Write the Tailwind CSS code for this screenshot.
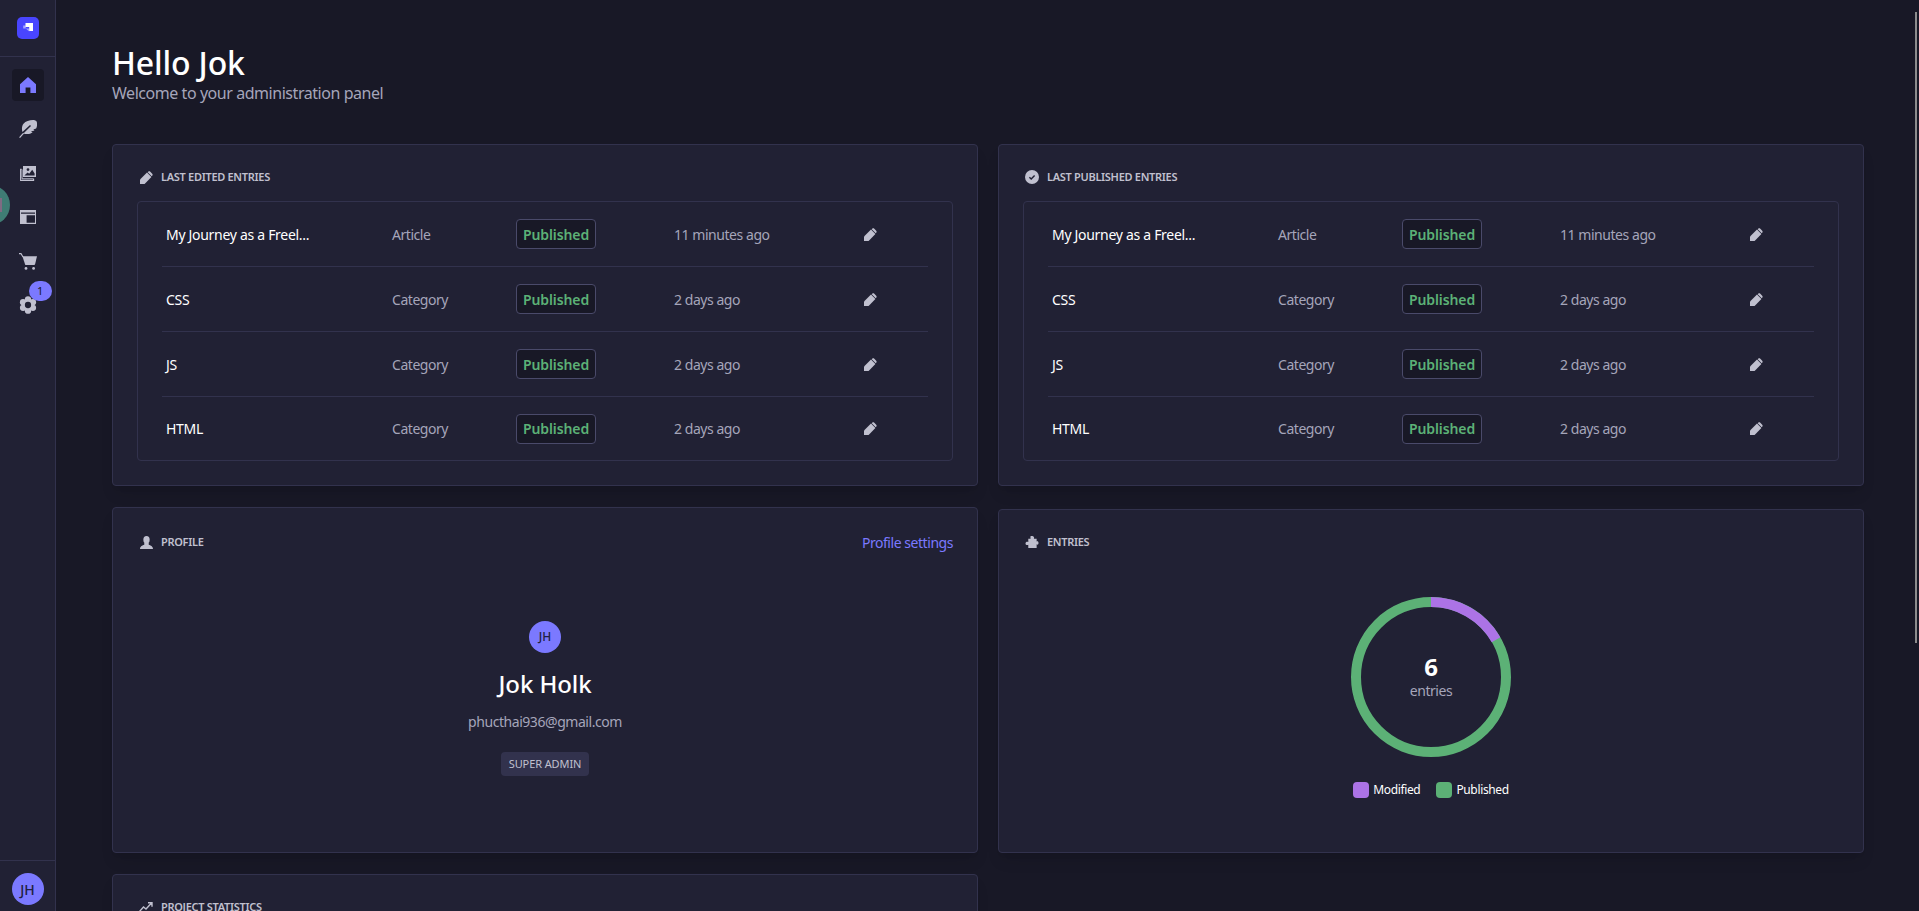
<!doctype html>
<html lang="en">
<head>
<meta charset="utf-8">
<title>Dashboard</title>
<script src="https://cdn.jsdelivr.net/npm/@tailwindcss/browser@4"></script>
</head>
<body class="bg-[#181826] font-['Noto_Sans',sans-serif] tracking-[-0.45px] text-white">
<svg width="0" height="0" class="absolute">
  <defs>
    <g id="pencil"><path d="M0 13V8.4L7 1.6l4.4 4.4L4.6 13z"/><path d="M8.2.8c.6-.6 1.5-.6 2.1 0l1.9 1.9c.6.6.6 1.5 0 2.1l-.5.5-4-4z"/></g>
  </defs>
</svg>
<div class="relative flex h-[911px] w-[1919px] overflow-hidden">
  <!-- sidebar -->
  <aside class="flex h-full w-14 shrink-0 flex-col border-r border-[#32324d] bg-[#212134]">
    <div class="flex h-[57px] shrink-0 items-center justify-center border-b border-[#32324d]">
      <div class="flex h-[22px] w-[22px] items-center justify-center rounded-[5px] bg-[#4945ff]">
        <svg viewBox="0 0 12 12" class="h-3 w-3"><path fill="#fff" d="M3.5 1H11v8H7.2V5H3.500z"/><path fill="#fff" opacity=".5" d="M1.2 3.6h2.6v2.8H1.200zM3.8 6.4h3.4v3.2z"/></svg>
      </div>
    </div>
    <nav class="mt-3 flex flex-col items-center gap-3">
      <a class="flex h-8 w-8 items-center justify-center rounded bg-[#181826]">
        <svg viewBox="0 0 16 16" class="h-4 w-4"><path fill="#7b79ff" d="M8 0 16 7.2V16H10.4V10.6H5.6V16H0V7.2z"/></svg>
      </a>
      <a class="flex h-8 w-8 items-center justify-center">
        <svg viewBox="0 0 18 18" class="h-[18px] w-[18px]"><path fill="#c0c0cf" d="M14 0c-3.500 0-7.500 1.200-9.500 3.800C2.800 6 2.600 9.200 3.400 12L11 5l1 1-7.600 7.400c3.100 1.100 6.800.9 9.200-1.200l-1.700-.7 3.600-.9-1.100-1.100 2.700-.9C18.300 6.300 18.400 3.300 17.600 1.500 16.900.5 15.500 0 14 0z"/><path stroke="#c0c0cf" stroke-width="1.200" d="M.6 17.600 4.600 13.200"/></svg>
      </a>
      <a class="flex h-8 w-8 items-center justify-center">
        <svg viewBox="0 0 16 15" class="h-[15px] w-4"><path fill="#c0c0cf" fill-rule="evenodd" d="M3 0h13v11H3zM8 2.200a1.400 1.400 0 1 0 0 2.800 1.400 1.400 0 0 0 0-2.800zM4.400 9.600h10.200V7.400l-2.400-3.600-3 4-1.600-1.400z"/><path fill="none" stroke="#c0c0cf" stroke-width="1.100" d="M1.600 3.400H.6v11h13v-1.600"/><path fill="none" stroke="#c0c0cf" stroke-width="1" d="M2 3.400v9.400h11.600"/></svg>
      </a>
      <a class="flex h-8 w-8 items-center justify-center">
        <svg viewBox="0 0 16 14" class="h-[14px] w-4"><path fill="#c0c0cf" d="M0 0h16v14H0z"/><path fill="#212134" d="M1 2.400h14v1.300H1zM6.600 5.200H15v7.600H6.600z"/></svg>
      </a>
      <a class="flex h-8 w-8 items-center justify-center">
        <svg viewBox="0 0 18 17" class="h-[17px] w-[18px]"><path fill="none" stroke="#c0c0cf" stroke-width="1.100" d="M0 .6h2l2 3.400"/><path fill="#c0c0cf" d="M3.400 3.200H18l-1.800 7.600-.6 1.200H6.300z"/><circle cx="7" cy="15.400" r="1.400" fill="#c0c0cf"/><circle cx="14.600" cy="15.400" r="1.400" fill="#c0c0cf"/></svg>
      </a>
      <a class="relative flex h-8 w-8 items-center justify-center">
        <svg viewBox="0 0 24 24" class="h-[18px] w-[18px]"><g fill="#c0c0cf"><circle cx="12" cy="4.400" r="4.200"/><circle cx="12" cy="19.600" r="4.200"/><circle cx="5.400" cy="8.200" r="4.200"/><circle cx="18.600" cy="8.200" r="4.200"/><circle cx="5.400" cy="15.800" r="4.200"/><circle cx="18.600" cy="15.800" r="4.200"/><circle cx="12" cy="12" r="7.500"/></g><circle cx="12" cy="12" r="4.200" fill="#212134"/></svg>
        <span class="absolute top-[-8px] left-[17px] flex h-5 w-[23px] items-center justify-center rounded-full bg-[#7b79ff] text-[11px] text-[#181826]">1</span>
      </a>
    </nav>
    <div class="mt-auto flex flex-col items-center border-t border-[#32324d] pt-3 pb-[6px]">
      <div class="flex h-8 w-8 items-center justify-center rounded-full bg-[#7b79ff] text-[14px] font-medium tracking-normal text-[#202040]">JH</div>
    </div>
  </aside>

  <!-- main -->
  <main class="min-w-0 flex-1 pt-[43px] pr-[55px] pl-14">
    <h1 class="text-[32px] leading-10 font-medium tracking-[-0.15px]">Hello Jok</h1>
    <p class="text-[16px] leading-5 text-[#a5a5ba]">Welcome to your administration panel</p>

    <div class="mt-[41px] grid grid-cols-2 gap-x-5 gap-y-[21px]">

      <!-- last edited -->
      <section class="rounded border border-[#32324d] bg-[#212134] p-6 shadow-lg">
        <h2 class="flex h-4 items-center gap-2 text-[11px] font-semibold tracking-[-0.3px] text-[#c0c0cf] uppercase">
          <span class="flex w-4 justify-end"><svg viewBox="0 0 13 13" class="h-[13px] w-[13px] fill-[#c0c0cf]"><use href="#pencil"/></svg></span>Last edited entries
        </h2>
        <div class="mt-4 rounded border border-[#32324d] px-6 text-[14px]">
          <div class="grid h-[65px] grid-cols-[226px_124px_158px_190px_1fr] items-center border-b border-[#32324d] pl-1 text-[#a5a5ba]">
            <span class="tracking-[-0.3px] text-white">My Journey as a Freel...</span><span>Article</span>
            <span class="flex h-[30px] w-20 items-center justify-center rounded border border-[#4a4a6a] bg-[#181826] font-semibold tracking-[-0.1px] text-[#5cb176]">Published</span>
            <span>11 minutes ago</span>
            <svg viewBox="0 0 13 13" class="h-[13px] w-[13px] fill-[#c0c0cf]"><use href="#pencil"/></svg>
          </div>
          <div class="grid h-[65px] grid-cols-[226px_124px_158px_190px_1fr] items-center border-b border-[#32324d] pl-1 text-[#a5a5ba]">
            <span class="tracking-[-0.3px] text-white">CSS</span><span>Category</span>
            <span class="flex h-[30px] w-20 items-center justify-center rounded border border-[#4a4a6a] bg-[#181826] font-semibold tracking-[-0.1px] text-[#5cb176]">Published</span>
            <span>2 days ago</span>
            <svg viewBox="0 0 13 13" class="h-[13px] w-[13px] fill-[#c0c0cf]"><use href="#pencil"/></svg>
          </div>
          <div class="grid h-[65px] grid-cols-[226px_124px_158px_190px_1fr] items-center border-b border-[#32324d] pl-1 text-[#a5a5ba]">
            <span class="tracking-[-0.3px] text-white">JS</span><span>Category</span>
            <span class="flex h-[30px] w-20 items-center justify-center rounded border border-[#4a4a6a] bg-[#181826] font-semibold tracking-[-0.1px] text-[#5cb176]">Published</span>
            <span>2 days ago</span>
            <svg viewBox="0 0 13 13" class="h-[13px] w-[13px] fill-[#c0c0cf]"><use href="#pencil"/></svg>
          </div>
          <div class="grid h-[63px] grid-cols-[226px_124px_158px_190px_1fr] items-center pl-1 text-[#a5a5ba]">
            <span class="tracking-[-0.3px] text-white">HTML</span><span>Category</span>
            <span class="flex h-[30px] w-20 items-center justify-center rounded border border-[#4a4a6a] bg-[#181826] font-semibold tracking-[-0.1px] text-[#5cb176]">Published</span>
            <span>2 days ago</span>
            <svg viewBox="0 0 13 13" class="h-[13px] w-[13px] fill-[#c0c0cf]"><use href="#pencil"/></svg>
          </div>
        </div>
      </section>

      <!-- last published -->
      <section class="rounded border border-[#32324d] bg-[#212134] p-6 shadow-lg">
        <h2 class="flex h-4 items-center gap-2 text-[11px] font-semibold tracking-[-0.3px] text-[#c0c0cf] uppercase">
          <span class="flex w-4 justify-end"><svg viewBox="0 0 14 14" class="h-[14px] w-[14px]"><circle cx="7" cy="7" r="7" fill="#c0c0cf"/><path fill="none" stroke="#212134" stroke-width="1.400" d="M4.400 7.200 6.200 9l3.400-3.600"/></svg></span>Last published entries
        </h2>
        <div class="mt-4 rounded border border-[#32324d] px-6 text-[14px]">
          <div class="grid h-[65px] grid-cols-[226px_124px_158px_190px_1fr] items-center border-b border-[#32324d] pl-1 text-[#a5a5ba]">
            <span class="tracking-[-0.3px] text-white">My Journey as a Freel...</span><span>Article</span>
            <span class="flex h-[30px] w-20 items-center justify-center rounded border border-[#4a4a6a] bg-[#181826] font-semibold tracking-[-0.1px] text-[#5cb176]">Published</span>
            <span>11 minutes ago</span>
            <svg viewBox="0 0 13 13" class="h-[13px] w-[13px] fill-[#c0c0cf]"><use href="#pencil"/></svg>
          </div>
          <div class="grid h-[65px] grid-cols-[226px_124px_158px_190px_1fr] items-center border-b border-[#32324d] pl-1 text-[#a5a5ba]">
            <span class="tracking-[-0.3px] text-white">CSS</span><span>Category</span>
            <span class="flex h-[30px] w-20 items-center justify-center rounded border border-[#4a4a6a] bg-[#181826] font-semibold tracking-[-0.1px] text-[#5cb176]">Published</span>
            <span>2 days ago</span>
            <svg viewBox="0 0 13 13" class="h-[13px] w-[13px] fill-[#c0c0cf]"><use href="#pencil"/></svg>
          </div>
          <div class="grid h-[65px] grid-cols-[226px_124px_158px_190px_1fr] items-center border-b border-[#32324d] pl-1 text-[#a5a5ba]">
            <span class="tracking-[-0.3px] text-white">JS</span><span>Category</span>
            <span class="flex h-[30px] w-20 items-center justify-center rounded border border-[#4a4a6a] bg-[#181826] font-semibold tracking-[-0.1px] text-[#5cb176]">Published</span>
            <span>2 days ago</span>
            <svg viewBox="0 0 13 13" class="h-[13px] w-[13px] fill-[#c0c0cf]"><use href="#pencil"/></svg>
          </div>
          <div class="grid h-[63px] grid-cols-[226px_124px_158px_190px_1fr] items-center pl-1 text-[#a5a5ba]">
            <span class="tracking-[-0.3px] text-white">HTML</span><span>Category</span>
            <span class="flex h-[30px] w-20 items-center justify-center rounded border border-[#4a4a6a] bg-[#181826] font-semibold tracking-[-0.1px] text-[#5cb176]">Published</span>
            <span>2 days ago</span>
            <svg viewBox="0 0 13 13" class="h-[13px] w-[13px] fill-[#c0c0cf]"><use href="#pencil"/></svg>
          </div>
        </div>
      </section>

      <!-- profile -->
      <section class="flex h-[346px] flex-col rounded border border-[#32324d] bg-[#212134] p-6 shadow-lg">
        <div class="flex h-5 items-center justify-between">
          <h2 class="flex items-center gap-2 text-[11px] font-semibold tracking-[-0.3px] text-[#c0c0cf] uppercase">
            <span class="flex w-4 justify-end"><svg viewBox="0 0 14 14" class="h-[13px] w-[13px]"><ellipse cx="7" cy="4" rx="3.400" ry="4" fill="#c0c0cf"/><path fill="#c0c0cf" d="M0 14c0-3 2.600-3.800 4.600-4.600V7h4.800v2.400C11.400 10.200 14 11 14 14z"/></svg></span>Profile
          </h2>
          <a class="text-[14px] text-[#7b79ff]">Profile settings</a>
        </div>
        <div class="flex flex-col items-center">
          <div class="mt-[69px] flex h-8 w-8 items-center justify-center rounded-full bg-[#7b79ff] text-[12px] font-medium tracking-normal text-[#202040]">JH</div>
          <div class="mt-[15px] text-[24px] leading-8 font-medium tracking-[-0.1px]">Jok Holk</div>
          <div class="mt-3 text-[14px] leading-5 text-[#a5a5ba]">phucthai936@gmail.com</div>
          <div class="mt-5 flex h-6 w-[88px] items-center justify-center rounded bg-[#32324d] text-[11px] tracking-[-0.1px] text-[#c0c0cf] uppercase">Super Admin</div>
        </div>
      </section>

      <!-- entries -->
      <section class="mt-[2px] flex flex-col rounded border border-[#32324d] bg-[#212134] p-6 shadow-lg">
        <h2 class="flex h-4 items-center gap-2 text-[11px] font-semibold tracking-[-0.3px] text-[#c0c0cf] uppercase">
          <span class="flex w-4 justify-end"><svg viewBox="0 0 14 14" class="h-[13px] w-[14px]"><path fill="#c0c0cf" d="M3 3h2.500C5 0 5.300-.2 7.300 0S9.600 2 9 3H12v3c1-.6 2-.2 2 1.500S13 9.700 12 9v4H3V9.500C2 10.100 0 10 0 8s2-2.200 3-1.500z"/></svg></span>Entries
        </h2>
        <div class="relative mx-auto mt-[47px] h-40 w-40">
          <svg viewBox="0 0 160 160" class="h-40 w-40 -rotate-90">
            <circle cx="80" cy="80" r="75" fill="none" stroke="#5cb176" stroke-width="10"/>
            <circle cx="80" cy="80" r="75" fill="none" stroke="#ac73e6" stroke-width="10" stroke-dasharray="78.54 471.24"/>
          </svg>
          <div class="absolute inset-0 flex flex-col items-center justify-center">
            <span class="text-[24px] leading-7 font-bold">6</span>
            <span class="text-[14px] leading-5 text-[#a5a5ba]">entries</span>
          </div>
        </div>
        <div class="mt-6 flex justify-center gap-4 text-[12px] tracking-[-0.35px]">
          <span class="flex items-center gap-1"><i class="h-4 w-4 rounded bg-[#ac73e6]"></i>Modified</span>
          <span class="flex items-center gap-1"><i class="h-4 w-4 rounded bg-[#5cb176]"></i>Published</span>
        </div>
      </section>

      <!-- project statistics -->
      <section class="h-[200px] rounded border border-[#32324d] bg-[#212134] p-6 shadow-lg">
        <h2 class="flex h-4 items-center gap-2 text-[11px] font-semibold tracking-[-0.3px] text-[#c0c0cf] uppercase">
          <span class="flex w-4 justify-end"><svg viewBox="0 0 14 10" class="h-[10px] w-[14px]"><path fill="none" stroke="#c0c0cf" stroke-width="1.400" d="M.5 9.500 4.500 5 7 7 12.500 1M9 .8h4v4"/></svg></span>Project statistics
        </h2>
      </section>
    </div>
  </main>

  <!-- decorative overlay: off-canvas circle and scrollbar thumb -->
  <div class="absolute top-[185px] left-[-30px] h-10 w-10 rounded-full bg-[#3f7c74]"></div>
  <div class="absolute top-[198px] left-0 h-[14px] w-[2px] bg-[#7f6b83]"></div>
  <div class="absolute top-3 left-[1915px] h-[631px] w-[2px] bg-[#8c8c8c]"></div>
</div>
</body>
</html>
